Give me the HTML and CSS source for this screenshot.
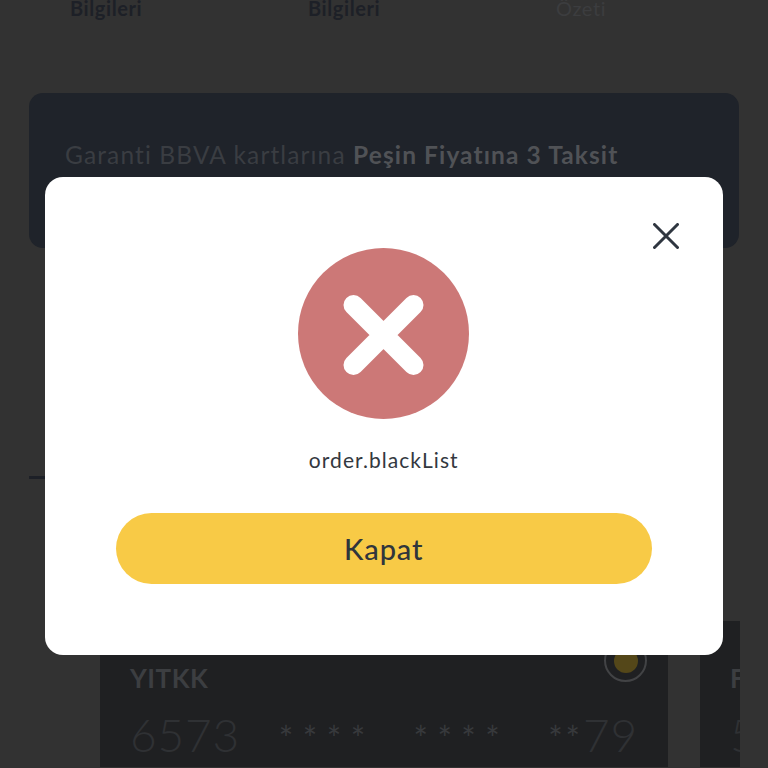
FILE: index.html
```html
<!DOCTYPE html>
<html lang="tr">
<head>
<meta charset="utf-8">
<title>Sipariş</title>
<link rel="stylesheet" href="styles.css">
</head>
<body>
<main class="page">
  <div class="steps">
    <span class="step step-a">Bilgileri</span>
    <span class="step step-b">Bilgileri</span>
    <span class="step step-c">Özeti</span>
  </div>
  <section class="banner">
    <p class="banner-text">Garanti BBVA kartlarına <strong>Peşin Fiyatına 3 Taksit</strong></p>
  </section>
  <div class="tabline"></div>
  <div class="cards">
    <article class="card">
      <div class="card-head">
        <span class="card-name">YITKK</span>
        <span class="radio"><span class="radio-dot"></span></span>
      </div>
      <div class="card-number">
        <span class="digits">6573</span>
        <span class="stars">****</span>
        <span class="stars">****</span>
        <span class="last"><span class="stars stars-short">**</span><span class="digits">79</span></span>
      </div>
    </article>
    <article class="card card-next">
      <div class="card-head"><span class="card-name">F</span></div>
      <div class="card-number"><span class="digits">5</span></div>
    </article>
  </div>
</main>
<div class="modal" role="dialog">
  <button class="close" aria-label="Kapat">
    <svg viewBox="0 0 26 26" width="26" height="26"><path d="M1.500 1.500 24.500 24.500M24.500 1.500 1.500 24.500" fill="none" stroke="#2f3640" stroke-width="3" stroke-linecap="round"/></svg>
  </button>
  <svg class="error-icon" viewBox="0 0 171 171" width="171" height="171">
    <circle cx="85.500" cy="85.500" r="85.500" fill="#cc7877"/>
    <path d="M55.500 57 115.500 117M115.500 57 55.500 117" fill="none" stroke="#fff" stroke-width="20" stroke-linecap="round"/>
  </svg>
  <p class="message">order.blackList</p>
  <button class="primary">Kapat</button>
</div>
</body>
</html>
```
FILE: styles.css
```css
* { box-sizing: border-box; }
html, body { margin: 0; height: 100%; }
body {
  position: relative;
  width: 768px;
  height: 768px;
  overflow: hidden;
  background: #323232;
  font-family: "Lato", "Noto Sans", sans-serif;
}
.page { display: flex; flex-direction: column; height: 768px; padding: 0 29px; }
.steps {
  display: flex;
  flex: none;
  height: 93px;
  margin-top: -4px;
  padding-left: 41px;
  font-size: 20px;
  font-weight: 700;
  line-height: 24px;
  letter-spacing: 0.6px;
}
.step { color: #1d2027; }
.step-a { width: 238px; }
.step-b { width: 248px; }
.step-c { color: #3c3d3f; font-weight: 400; }
.banner {
  flex: none;
  height: 155px;
  margin-top: 4px;
  padding: 47px 36px 0;
  background: #1f232a;
  border-radius: 14px;
}
.banner-text { margin: 0; font-size: 24.500px; line-height: 30px; letter-spacing: 1.120px; color: #3a3d42; white-space: nowrap; }
.banner-text strong { color: #505256; font-weight: 700; letter-spacing: 1.100px; }
.tabline { flex: none; width: 40px; height: 3px; margin-top: 228px; background: #1d2027; }
.cards { flex: none; display: flex; gap: 32px; margin-top: 142px; margin-left: 71px; }
.card { flex: none; width: 568px; height: 146px; padding: 40px 30px 0; background: #1f2022; overflow: hidden; }
.card-next { width: 40px; padding-right: 0; }
.card-head { display: flex; justify-content: space-between; align-items: center; height: 34px; }
.card-name { font-size: 26px; font-weight: 700; letter-spacing: 0.5px; color: #3c3e41; }
.radio { display: flex; align-items: center; justify-content: center; flex: none; width: 43px; height: 43px; margin: -35px -9px 0 0; border: 2px solid #424345; border-radius: 50%; }
.radio-dot { width: 24px; height: 24px; border-radius: 50%; background: #544719; }
.card-number { display: flex; justify-content: space-between; align-items: flex-start; margin-top: 12px; }
.digits { font-size: 46px; font-weight: 300; line-height: 56px; letter-spacing: 0.8px; color: #2f3134; }
.stars { margin-top: 11px; font-size: 34px; line-height: 40px; letter-spacing: 9.500px; color: #37393c; }
.last { display: flex; align-items: flex-start; }
.stars-short { letter-spacing: 3px; margin-right: 0; }
.modal {
  position: absolute;
  left: 44.500px;
  top: 177px;
  width: 678.500px;
  height: 478px;
  display: flex;
  flex-direction: column;
  align-items: center;
  padding-top: 71px;
  background: #fff;
  border-radius: 18px;
}
.close { position: absolute; top: 45.500px; right: 44.500px; display: flex; width: 26px; height: 26px; padding: 0; border: 0; background: none; }
.error-icon { display: block; flex: none; margin-left: -1px; }
.message { margin: 27px 0 0; font-size: 21px; line-height: 28px; letter-spacing: 1.050px; color: #333840; }
.primary {
  flex: none;
  width: 536px;
  height: 71px;
  margin-top: 39px;
  border: 0;
  border-radius: 36px;
  background: #f8ca46;
  color: #30353c;
  font-family: inherit;
  font-size: 29px;
  font-weight: 500;
  letter-spacing: 0.9px;
}
```
